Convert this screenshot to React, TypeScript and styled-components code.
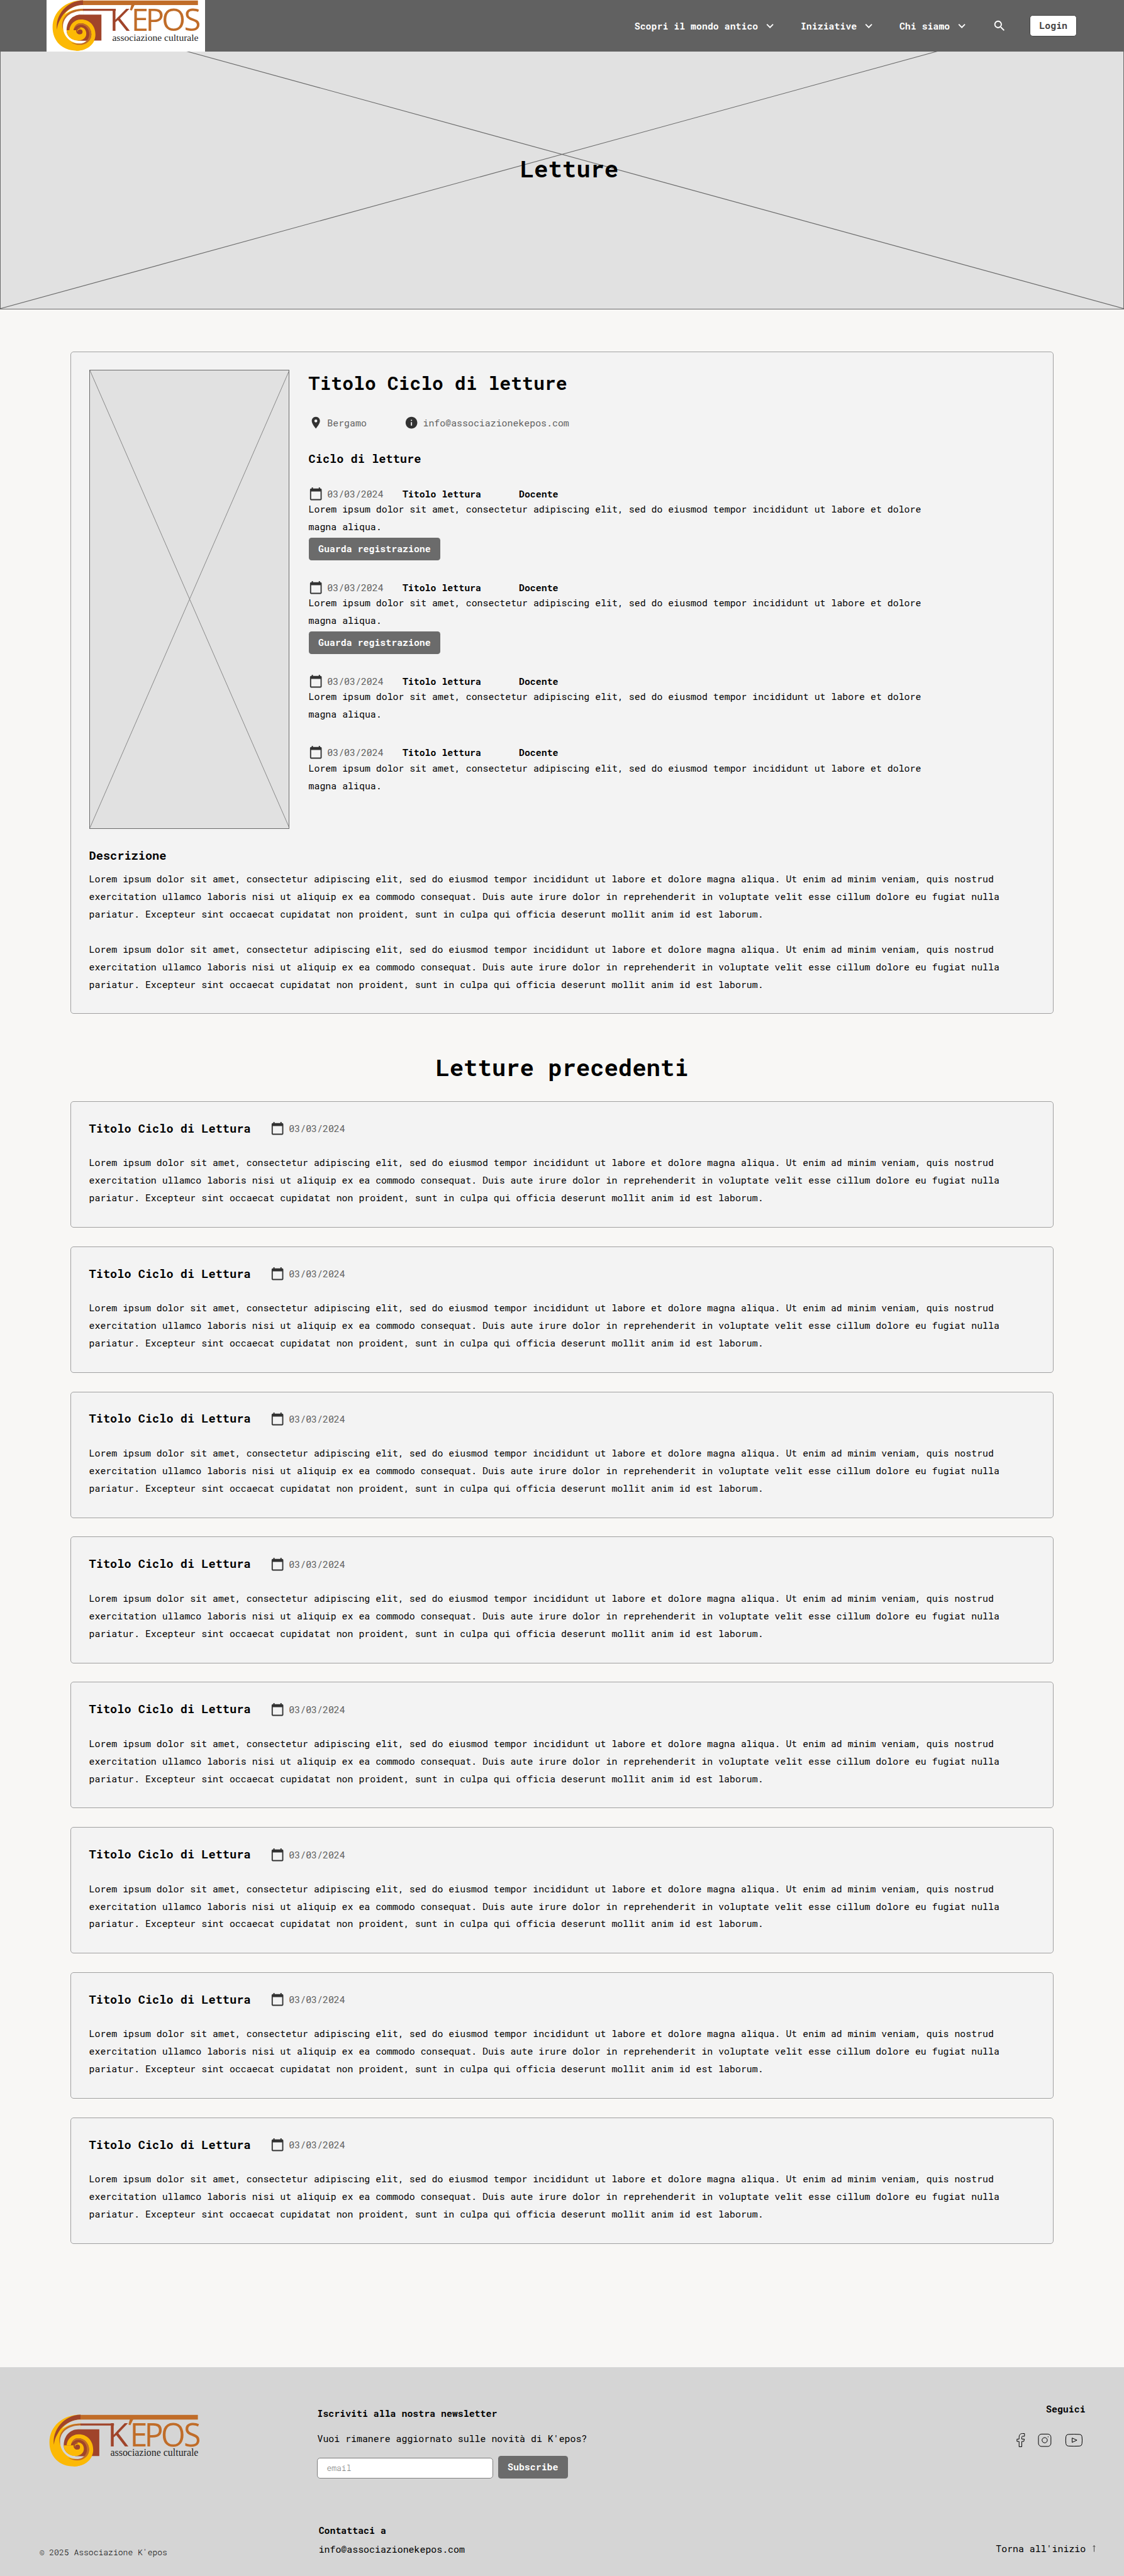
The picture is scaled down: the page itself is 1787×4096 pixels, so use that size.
import React from 'react';
import styled, { createGlobalStyle, css } from 'styled-components';

const SCALE_X = 0.6205;
const SCALE_Y = 0.6206;
const u = (n: number) => `${(n * SCALE_X).toFixed(3)}px`;
const v = (n: number) => `${(n * SCALE_Y).toFixed(3)}px`;

const mono = (size: number, line: number, weight = 400) => css`
  font-family: 'Roboto Mono', 'DejaVu Sans Mono', monospace;
  font-size: ${u(size)};
  line-height: ${v(line)};
  font-weight: ${weight};
  letter-spacing: 0.008px;
`;

const Global = createGlobalStyle`
  *, *::before, *::after { box-sizing: border-box; }
  body { margin: 0; background: #f8f7f5; }
  p, h1, h2, h3, ul { margin: 0; padding: 0; }
`;

const Page = styled.div`
  display: flex;
  flex-direction: column;
  min-height: 4096px;
  color: #000;
  ${mono(24, 45)}
`;

/* ---------- header ---------- */

const Header = styled.header`
  display: flex;
  justify-content: space-between;
  align-items: center;
  height: ${v(132)};
  padding: 0 ${u(121)} 0 ${u(120)};
  background: #616161;
`;

const LogoBox = styled.a`
  display: block;
  width: ${u(406)};
  height: ${v(132)};
  padding-left: ${u(13.5)};
  background: #fff;
`;

const Nav = styled.nav`
  display: flex;
  align-items: center;
  gap: ${u(60)};
`;

const NavItem = styled.a`
  display: flex;
  align-items: center;
  gap: ${u(13)};
  color: #fff;
  white-space: nowrap;
  ${mono(24, 36, 700)}
`;

const Icon = styled.svg`
  display: block;
  flex: none;
  width: ${u(36)};
  height: ${u(36)};
`;

const LoginButton = styled.button`
  width: ${u(120)};
  height: ${v(56)};
  padding: 0;
  border: ${u(2)} solid #424242;
  border-radius: ${u(8)};
  background: #fff;
  color: #424242;
  ${mono(24, 50, 700)}
`;

/* ---------- hero ---------- */

const Hero = styled.section`
  position: relative;
  display: flex;
  justify-content: center;
  height: ${v(660)};
  padding: ${v(259.7)} 0 0 ${u(37)};
  background: #e1e1e1;
  border: 1px solid #6a6a6a;
  border-top: 0;
`;

const HeroLines = styled.svg`
  position: absolute;
  inset: 0;
  width: 100%;
  height: 100%;
`;

const Heading = styled.h1`
  position: relative;
  text-align: center;
  ${mono(60, 80, 700)}
`;

/* ---------- content ---------- */

const Main = styled.main`
  display: flex;
  flex-direction: column;
  padding: ${v(108)} ${u(180)} 0;
`;

const Card = styled.article<{ $height: number }>`
  height: ${(p) => v(p.$height)};
  padding: ${v(46.5)} ${u(46.5)};
  border: 1px solid #a0a0a0;
  border-radius: ${u(8)};
  background: #f3f3f3;
`;

const Split = styled.div`
  display: flex;
  gap: ${u(48.5)};
`;

const Poster = styled.svg`
  display: block;
  flex: none;
  width: ${u(514)};
  height: ${v(1175)};
  border: 1px solid #6a6a6a;
  background: #e1e1e1;
`;

const Details = styled.div`
  display: flex;
  flex-direction: column;
  gap: ${v(53)};
`;

const CycleTitle = styled.h2`
  padding-top: ${v(1.5)};
  margin-bottom: ${v(-1.5)};
  ${mono(48, 64, 700)}
`;

const SubTitle = styled.h3`
  padding-top: ${v(1.5)};
  margin-bottom: ${v(-1.5)};
  white-space: nowrap;
  ${mono(30, 40, 700)}
`;

const MetaRow = styled.div<{ $gap: number }>`
  display: flex;
  align-items: center;
  gap: ${(p) => u(p.$gap)};
`;

const Meta = styled.span`
  display: flex;
  align-items: center;
  gap: ${u(12)};
  color: #616161;
  ${mono(24, 36)}
`;

const Lessons = styled.ul`
  display: flex;
  flex-direction: column;
  list-style: none;
`;

const Lesson = styled.li<{ $recorded: boolean }>`
  display: flex;
  flex-direction: column;
  align-items: flex-start;
  height: ${(p) => v(p.$recorded ? 240 : 183)};
`;

const LessonHead = styled.div`
  display: flex;
  align-items: center;
  gap: ${u(48.7)};
`;

const Strong = styled.strong<{ $indent?: number }>`
  margin-left: ${(p) => u(p.$indent ?? 0)};
  ${mono(24, 36, 700)}
`;

const Copy = styled.p<{ $width?: number; $top?: number }>`
  width: ${(p) => (p.$width ? u(p.$width) : 'auto')};
  margin-top: ${(p) => v(p.$top ?? 0)};
  ${mono(24, 45)}
`;

const Button = styled.button<{ $width: number }>`
  width: ${(p) => u(p.$width)};
  height: ${v(57)};
  padding: 0;
  border: 0;
  border-radius: ${u(7)};
  background: #6b6b6b;
  color: #fff;
  white-space: nowrap;
  ${mono(24, 57, 700)}
`;

const WatchButton = styled(Button)`
  margin-top: ${v(5)};
`;

const Description = styled.section`
  padding-top: ${v(47)};
`;

const PastHeading = styled(Heading)`
  margin: ${v(97)} 0 ${v(46.5)};
`;

const PastList = styled.section`
  display: flex;
  flex-direction: column;
  gap: ${v(48)};
`;

const PastHead = styled.div`
  display: flex;
  align-items: flex-end;
  gap: ${u(50)};
`;

/* ---------- footer ---------- */

const Footer = styled.footer`
  display: flex;
  flex: 1;
  margin-top: ${v(316)};
  padding-right: ${u(68)};
  background: #d5d5d5;
`;

const Brand = styled.div`
  display: flex;
  flex-direction: column;
  width: ${u(813)};
  padding: ${v(120)} 0 0 ${u(101)};
`;

const BrandLogo = styled.div`
  width: ${u(386)};
  height: ${v(134)};
  margin-left: ${u(24)};
`;

const Small = styled.span<{ $top?: number }>`
  margin-top: ${(p) => v(p.$top ?? 0)};
  color: #000;
  ${mono(21, 30, 300)}
`;

const Newsletter = styled.div`
  display: flex;
  flex: 1;
  flex-direction: column;
  padding-top: ${v(100)};
`;

const FooterTitle = styled.strong`
  ${mono(24, 36, 700)}
`;

const FooterText = styled.span<{ $top?: number }>`
  margin-top: ${(p) => v(p.$top ?? 0)};
  white-space: nowrap;
  ${mono(24, 36)}
`;

const Form = styled.form`
  display: flex;
  align-items: flex-end;
  gap: ${u(13)};
  margin-top: ${v(27)};
`;

const Email = styled.input`
  width: ${u(450)};
  height: ${v(53)};
  padding: 0 ${u(22.5)};
  border: 1px solid #7d7d7d;
  border-radius: ${u(8)};
  background: #fff;
  ${mono(21, 30, 300)}
  &::placeholder { color: #757575; opacity: 1; }
`;

const Contact = styled.div`
  display: flex;
  flex-direction: column;
  gap: ${v(11)};
  margin: ${v(115.5)} 0 0 ${u(3.5)};
`;

const Follow = styled.div`
  display: flex;
  flex-direction: column;
  align-items: flex-end;
  padding-top: ${v(88)};
`;

const FollowTitle = styled(FooterTitle)`
  margin-right: ${u(31)};
`;

const Social = styled.svg`
  display: block;
  width: ${u(172)};
  height: ${v(38)};
  margin: ${v(44)} ${u(38)} 0 0;
`;

const BackToTop = styled.a`
  display: flex;
  align-items: center;
  gap: ${u(17)};
  margin-top: ${v(240.7)};
  padding-right: ${u(5)};
  white-space: nowrap;
  ${mono(24, 36)}
`;

const Arrow = styled.svg`
  display: block;
  width: ${u(8)};
  height: ${v(17)};
`;

/* ---------- drawings ---------- */

const RED = '#a0442a';
const ORANGE = '#c06c28';
const YELLOW = '#fcb905';

const LogoSvg = styled.svg`
  display: block;
  width: 100%;
  height: 100%;
  overflow: visible;
`;

const HeaderLogoFrame = styled.div`
  width: ${u(378)};
  height: ${v(130.6)};
`;

const Logo = ({ paper }: { paper: string }) => (
  <LogoSvg viewBox="75 107 1160 402" preserveAspectRatio="none">
    <path fill={YELLOW} d="M318 110C180 110 78 200 78 322C78 432 155 507 265 507C350 507 415 455 415 378L318 300Z" />
    <path fill={RED} d="M318 110V147C240 150 180 190 150 240C130 275 116 300 113 342C96 230 190 112 318 110Z" />
    <path fill={paper} d="M319 147V178H300C250 180 205 195 172 222C205 175 260 147 319 147Z" />
    <path fill={ORANGE} d="M318 177V193C220 193 158 260 161 345C130 250 205 177 318 177Z" />
    <path fill={paper} d="M319 192V223L345 427C340 440 320 450 295 450C215 450 160 390 160 315C160 245 220 192 319 192Z" />
    <path fill={RED} d="M300 222H462V427H278C220 420 188 390 188 345C188 275 235 222 300 222Z" />
    <path fill={YELLOW} d="M210 345C214 300 250 261 303 261C370 261 415 312 415 380C415 450 350 507 265 507L235 447C320 475 383 435 383 378C383 330 345 291 300 291C265 291 250 315 243 345Z" />
    <path fill={ORANGE} d="M243 345C250 310 270 291 300 291C350 291 383 330 383 378C383 430 340 461 292 461C265 461 240 452 222 440C250 450 275 452 297 450C340 448 365 415 365 375C365 335 340 303 300 303C272 303 250 325 243 345Z" />
    <path fill={RED} d="M243 345C250 325 272 307 300 307C340 307 366 335 366 378C366 402 355 418 342 428L278 427L330 340L262 345Z" />
    <path fill={YELLOW} d="M188 345H264C268 330 278 322 297 322C322 322 343 342 343 372C343 405 315 427 278 427C228 427 190 395 188 345Z" />
    <path fill={RED} d="M264 345C266 332 276 323 294 322L297 330C282 330 276 345 281 355L290 378C274 377 262 364 264 345Z" />
    <path fill={YELLOW} d="M272 350C274 340 280 334 290 332L284 345C278 350 279 357 281 361C275 360 272 356 272 350Z" />
    <circle fill={RED} cx="294" cy="358" r="19.5" />
    <rect fill={ORANGE} x="317" y="111" width="904" height="36" />
    <path fill={RED} d="M317 177H575V193H317Z" />
    <path fill={ORANGE} d="M697 146H723L701 190L686 186Z" />
    <text fill={RED} x="525" y="352" fontFamily="'Open Sans', sans-serif" fontSize="243" textLength="160" lengthAdjust="spacingAndGlyphs">K</text>
    <text fill={ORANGE} x="697 809 936 1111" y="352" fontFamily="'Open Sans', sans-serif" fontSize="243">EPOS</text>
    <text fill="#242424" x="547" y="428" fontFamily="'Liberation Serif', serif" fontSize="76" textLength="678" lengthAdjust="spacingAndGlyphs">
      associazione culturale
    </text>
  </LogoSvg>
);

const Chevron = () => (
  <Icon viewBox="0 0 24 24" fill="currentColor">
    <path d="M16.59 8.59 12 13.17 7.41 8.59 6 10l6 6 6-6z" />
  </Icon>
);

const Search = () => (
  <Icon viewBox="0 0 24 24" fill="#fff">
    <path d="M15.5 14h-.79l-.28-.27C15.41 12.59 16 11.11 16 9.5 16 5.91 13.09 3 9.5 3S3 5.91 3 9.5 5.91 16 9.5 16c1.61 0 3.09-.59 4.23-1.57l.27.28v.79l5 4.99L20.49 19l-4.99-5zm-6 0C7.01 14 5 11.99 5 9.5S7.01 5 9.5 5 14 7.01 14 9.5 11.99 14 9.5 14z" />
  </Icon>
);

const Pin = () => (
  <Icon viewBox="0 0 24 24" fill="#323232">
    <path d="M12 2C8.13 2 5 5.13 5 9c0 5.25 7 13 7 13s7-7.75 7-13c0-3.87-3.13-7-7-7zm0 9.5a2.5 2.5 0 0 1 0-5 2.5 2.5 0 0 1 0 5z" />
  </Icon>
);

const Info = () => (
  <Icon viewBox="0 0 24 24" fill="#323232">
    <path d="M12 2C6.48 2 2 6.48 2 12s4.48 10 10 10 10-4.48 10-10S17.52 2 12 2zm1 15h-2v-6h2v6zm0-8h-2V7h2v2z" />
  </Icon>
);

const Calendar = () => (
  <Icon viewBox="0 0 24 24" fill="#323232">
    <path d="M20 3h-1V1h-2v2H7V1H5v2H4c-1.1 0-2 .9-2 2v16c0 1.1.9 2 2 2h16c1.1 0 2-.9 2-2V5c0-1.1-.9-2-2-2zm0 18H4V8h16v13z" />
  </Icon>
);

const SocialIcons = () => (
  <Social viewBox="2602 6234 172 38" fill="none" stroke="#000" strokeWidth="1.6">
    <path d="M2610.4 6270.2V6256.6H2605V6250.6H2610.4V6246C2610.4 6239.5 2613.5 6236.4 2619 6236.4H2624.3V6243.4H2619.6C2617.7 6243.4 2617.3 6244.4 2617.3 6246V6250.6H2624L2622.4 6256.6H2617.3V6270.2Z" />
    <rect x="2660" y="6237.8" width="32" height="31.6" rx="8" />
    <circle cx="2676" cy="6253.5" r="6.7" />
    <circle cx="2684.7" cy="6245" r="0.5" />
    <path d="M2737 6238.6Q2751 6237.6 2765 6238.6C2769.5 6239 2771 6241 2771.5 6245Q2772.6 6253.5 2771.5 6262C2771 6266 2769.5 6268 2765 6268.4Q2751 6269.4 2737 6268.4C2732.5 6268 2731 6266 2730.4 6262Q2729.3 6253.5 2730.4 6245C2731 6241 2732.5 6239 2737 6238.6Z" />
    <path d="M2746.3 6247.8V6259L2758.5 6253.4Z" />
  </Social>
);

const LOREM =
  'Lorem ipsum dolor sit amet, consectetur adipiscing elit, sed do eiusmod tempor incididunt ut labore et dolore magna aliqua.';
const LOREM_LONG = `${LOREM} Ut enim ad minim veniam, quis nostrud exercitation ullamco laboris nisi ut aliquip ex ea commodo consequat. Duis aute irure dolor in reprehenderit in voluptate velit esse cillum dolore eu fugiat nulla pariatur. Excepteur sint occaecat cupidatat non proident, sunt in culpa qui officia deserunt mollit anim id est laborum.`;

const DATE = '03/03/2024';
const MENU = ['Scopri il mondo antico', 'Iniziative', 'Chi siamo'];
const LESSONS = [true, true, false, false];

export default function App() {
  return (
    <Page>
      <Global />
      <Header>
        <LogoBox>
          <HeaderLogoFrame>
            <Logo paper="#ffffff" />
          </HeaderLogoFrame>
        </LogoBox>
        <Nav>
          {MENU.map((label) => (
            <NavItem key={label}>
              {label}
              <Chevron />
            </NavItem>
          ))}
          <Search />
          <LoginButton>Login</LoginButton>
        </Nav>
      </Header>

      <Hero>
        <HeroLines viewBox="0 132 2880 660" preserveAspectRatio="none" stroke="#6a6a6a" strokeWidth="1.8">
          <path d="M0 0L2880 792M0 792L2880 0" />
        </HeroLines>
        <Heading>Letture</Heading>
      </Hero>

      <Main>
        <Card $height={1698}>
          <Split>
            <Poster viewBox="0 0 514 1175" preserveAspectRatio="none" stroke="#7a7a7a" strokeWidth="1.4">
              <path d="M0 0L514 1175M514 0L0 1175" />
            </Poster>
            <Details>
              <CycleTitle>Titolo Ciclo di letture</CycleTitle>
              <MetaRow $gap={96.5}>
                <Meta>
                  <Pin />
                  Bergamo
                </Meta>
                <Meta>
                  <Info />
                  info@associazionekepos.com
                </Meta>
              </MetaRow>
              <SubTitle>Ciclo di letture</SubTitle>
              <Lessons>
                {LESSONS.map((recorded, i) => (
                  <Lesson key={i} $recorded={recorded}>
                    <LessonHead>
                      <Meta>
                        <Calendar />
                        {DATE}
                      </Meta>
                      <Strong>Titolo lettura</Strong>
                      <Strong $indent={48}>Docente</Strong>
                    </LessonHead>
                    <Copy $width={1620}>{LOREM}</Copy>
                    {recorded && <WatchButton $width={338}>Guarda registrazione</WatchButton>}
                  </Lesson>
                ))}
              </Lessons>
            </Details>
          </Split>
          <Description>
            <SubTitle>Descrizione</SubTitle>
            <Copy $top={20.5}>{LOREM_LONG}</Copy>
            <Copy $top={45}>{LOREM_LONG}</Copy>
          </Description>
        </Card>

        <PastHeading as="h2">Letture precedenti</PastHeading>

        <PastList>
          {Array.from({ length: 8 }, (_, i) => (
            <Card key={i} $height={324}>
              <PastHead>
                <SubTitle>Titolo Ciclo di Lettura</SubTitle>
                <Meta>
                  <Calendar />
                  {DATE}
                </Meta>
              </PastHead>
              <Copy $top={48}>{LOREM_LONG}</Copy>
            </Card>
          ))}
        </PastList>
      </Main>

      <Footer>
        <Brand>
          <BrandLogo>
            <Logo paper="#d5d5d5" />
          </BrandLogo>
          <Small $top={205.5}>© 2025 Associazione K'epos</Small>
        </Brand>
        <Newsletter>
          <FooterTitle>Iscriviti alla nostra newsletter</FooterTitle>
          <FooterText $top={28.7}>Vuoi rimanere aggiornato sulle novità di K'epos?</FooterText>
          <Form>
            <Email placeholder="email" />
            <Button type="button" $width={179}>
              Subscribe
            </Button>
          </Form>
          <Contact>
            <FooterTitle>Contattaci a</FooterTitle>
            <FooterText>info@associazionekepos.com</FooterText>
          </Contact>
        </Newsletter>
        <Follow>
          <FollowTitle>Seguici</FollowTitle>
          <SocialIcons />
          <BackToTop>
            Torna all'inizio
            <Arrow viewBox="0 0 8 17" fill="none" stroke="#444" strokeWidth="1.6">
              <path d="M4 17V1M1 4L4 1L7 4" />
            </Arrow>
          </BackToTop>
        </Follow>
      </Footer>
    </Page>
  );
}
